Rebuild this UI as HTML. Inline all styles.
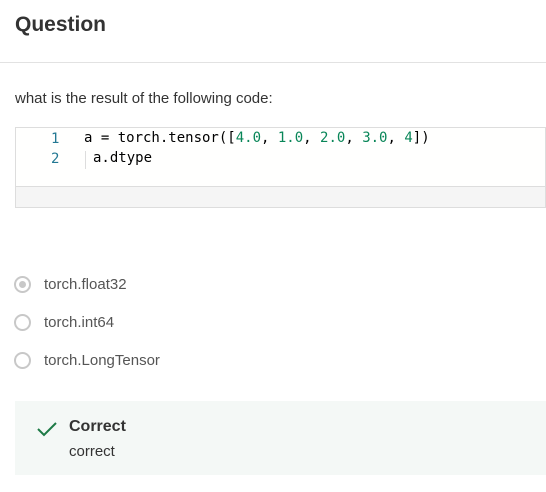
<!DOCTYPE html>
<html><head><style>
body{margin:0;width:546px;height:492px;background:#fff;font-family:"Liberation Sans",sans-serif;color:#333;position:relative;overflow:hidden}
.abs{position:absolute}
.mono{font-family:"DejaVu Sans Mono","Liberation Mono",monospace;font-size:14px}
.n{color:#098658}
.radio{position:absolute;left:14px;width:17px;height:17px;border:2px solid #c8c8c8;border-radius:50%;box-sizing:border-box}
.lbl{position:absolute;left:44px;font-size:15px;color:#555}
</style></head><body>
<div class="abs" style="left:15px;top:13px;font-size:21px;font-weight:bold;color:#333">Question</div>
<div class="abs" style="left:0;top:62px;width:546px;height:1px;background:#e2e2e2"></div>
<div class="abs" style="left:15px;top:90px;font-size:15px;color:#333">what is the result of the following code:</div>
<div class="abs" style="left:15px;top:127px;width:531px;height:81px;border:1px solid #ddd;box-sizing:border-box;background:#f5f5f5">
 <div class="abs" style="left:0;top:0;right:0;height:58px;background:#fffffe;border-bottom:1px solid #ddd"></div>
</div>
<div class="abs mono" style="left:51px;top:131px;color:#237893">1</div>
<div class="abs mono" style="left:51px;top:151px;color:#237893">2</div>
<div class="abs mono" style="left:84px;top:130px;color:#000">a = torch.tensor([<span class="n">4.0</span>, <span class="n">1.0</span>, <span class="n">2.0</span>, <span class="n">3.0</span>, <span class="n">4</span>])</div>
<div class="abs" style="left:85px;top:151px;width:1px;height:18px;background:#ddd"></div>
<div class="abs mono" style="left:93px;top:150px;color:#000">a.dtype</div>
<div class="radio" style="top:276px"><div class="abs" style="left:3px;top:3px;width:7px;height:7px;border-radius:50%;background:#c8c8c8"></div></div>
<div class="lbl" style="top:276px">torch.float32</div>
<div class="radio" style="top:314px"></div>
<div class="lbl" style="top:314px">torch.int64</div>
<div class="radio" style="top:352px"></div>
<div class="lbl" style="top:352px">torch.LongTensor</div>
<div class="abs" style="left:15px;top:401px;width:531px;height:74px;background:#f4f8f6"></div>
<svg class="abs" style="left:36px;top:420px" width="22" height="18"><path d="M2 9 L8 15 L20 3" fill="none" stroke="#1d7a46" stroke-width="2"/></svg>
<div class="abs" style="left:69px;top:418px;font-size:16px;font-weight:bold;color:#333">Correct</div>
<div class="abs" style="left:69px;top:443px;font-size:15px;color:#333">correct</div>
</body></html>
